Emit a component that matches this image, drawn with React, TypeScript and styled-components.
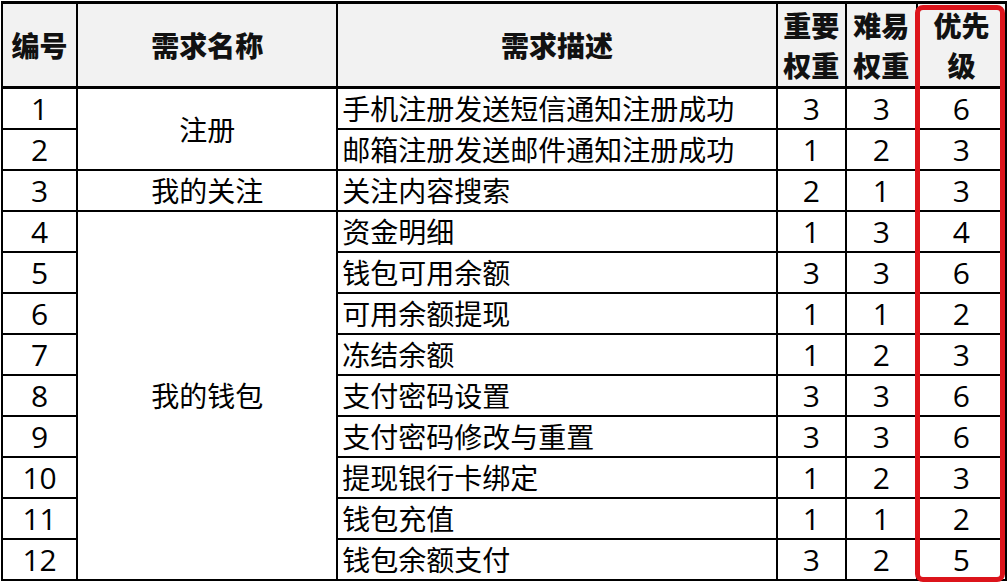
import styled, { createGlobalStyle } from "styled-components";

const GlobalStyle = createGlobalStyle`
    html, body {
        margin: 0;
        padding: 0;
        background: #fff;
    }
    body {
        font-family: "Noto Sans CJK SC", "Open Sans", sans-serif;
    }
`;

const Sheet = styled.div`
    position: relative;
    width: 1006px;
    height: 582px;
`;

const Table = styled.table`
    border-collapse: collapse;
    table-layout: fixed;
    width: 1006px;
    margin-left: 1px;
    margin-top: 1px;
    color: #000;
`;

const HeadCell = styled.th`
    height: 82px;
    padding: 0;
    background: #f2f2f2;
    border: 2px solid #000;
    border-top-width: 3px;
    border-bottom-width: 3px;
    font-family: "Noto Sans CJK SC", sans-serif;
    font-weight: 900;
    font-size: 28px;
    line-height: 40px;
    text-align: center;
    vertical-align: middle;
    color: #111;
`;

const Cell = styled.td<{ $align?: "left" | "center"; $num?: boolean }>`
    height: 39px;
    padding: ${(p) => (p.$align === "left" ? "0 0 0 4px" : "0")};
    border: 2px solid #000;
    font-family: ${(p) =>
        p.$num ? `"Open Sans", "Noto Sans CJK SC", sans-serif` : `"Noto Sans CJK SC", sans-serif`};
    font-size: ${(p) => (p.$num ? "30px" : "28px")};
    line-height: 39px;
    text-align: ${(p) => p.$align ?? "center"};
    vertical-align: middle;
    white-space: nowrap;
    overflow: hidden;
`;

const Col = styled.col<{ $w: number }>`
    width: ${(p) => p.$w}px;
`;

const PriorityBox = styled.div`
    position: absolute;
    left: 915px;
    top: 4px;
    width: 90px;
    height: 577px;
    box-sizing: border-box;
    border: 5px solid #dc141b;
    border-radius: 8px;
    pointer-events: none;
`;

type Row = {
    id: number;
    name?: string;
    span?: number;
    desc: string;
    imp: number;
    diff: number;
    prio: number;
};

const rows: Row[] = [
    { id: 1, name: "注册", span: 2, desc: "手机注册发送短信通知注册成功", imp: 3, diff: 3, prio: 6 },
    { id: 2, desc: "邮箱注册发送邮件通知注册成功", imp: 1, diff: 2, prio: 3 },
    { id: 3, name: "我的关注", span: 1, desc: "关注内容搜索", imp: 2, diff: 1, prio: 3 },
    { id: 4, name: "我的钱包", span: 9, desc: "资金明细", imp: 1, diff: 3, prio: 4 },
    { id: 5, desc: "钱包可用余额", imp: 3, diff: 3, prio: 6 },
    { id: 6, desc: "可用余额提现", imp: 1, diff: 1, prio: 2 },
    { id: 7, desc: "冻结余额", imp: 1, diff: 2, prio: 3 },
    { id: 8, desc: "支付密码设置", imp: 3, diff: 3, prio: 6 },
    { id: 9, desc: "支付密码修改与重置", imp: 3, diff: 3, prio: 6 },
    { id: 10, desc: "提现银行卡绑定", imp: 1, diff: 2, prio: 3 },
    { id: 11, desc: "钱包充值", imp: 1, diff: 1, prio: 2 },
    { id: 12, desc: "钱包余额支付", imp: 3, diff: 2, prio: 5 },
];

function App() {
    return (
        <>
            <GlobalStyle />
            <Sheet>
                <Table>
                    <colgroup>
                        <Col $w={75} />
                        <Col $w={260} />
                        <Col $w={439} />
                        <Col $w={69} />
                        <Col $w={71} />
                        <Col $w={89} />
                    </colgroup>
                    <thead>
                        <tr>
                            <HeadCell>编号</HeadCell>
                            <HeadCell>需求名称</HeadCell>
                            <HeadCell>需求描述</HeadCell>
                            <HeadCell>
                                重要
                                <br />
                                权重
                            </HeadCell>
                            <HeadCell>
                                难易
                                <br />
                                权重
                            </HeadCell>
                            <HeadCell>
                                优先
                                <br />
                                级
                            </HeadCell>
                        </tr>
                    </thead>
                    <tbody>
                        {rows.map((r) => (
                            <tr key={r.id}>
                                <Cell $num>{r.id}</Cell>
                                {r.name && <Cell rowSpan={r.span}>{r.name}</Cell>}
                                <Cell $align="left">{r.desc}</Cell>
                                <Cell $num>{r.imp}</Cell>
                                <Cell $num>{r.diff}</Cell>
                                <Cell $num>{r.prio}</Cell>
                            </tr>
                        ))}
                    </tbody>
                </Table>
                <PriorityBox />
            </Sheet>
        </>
    );
}

export default App;
